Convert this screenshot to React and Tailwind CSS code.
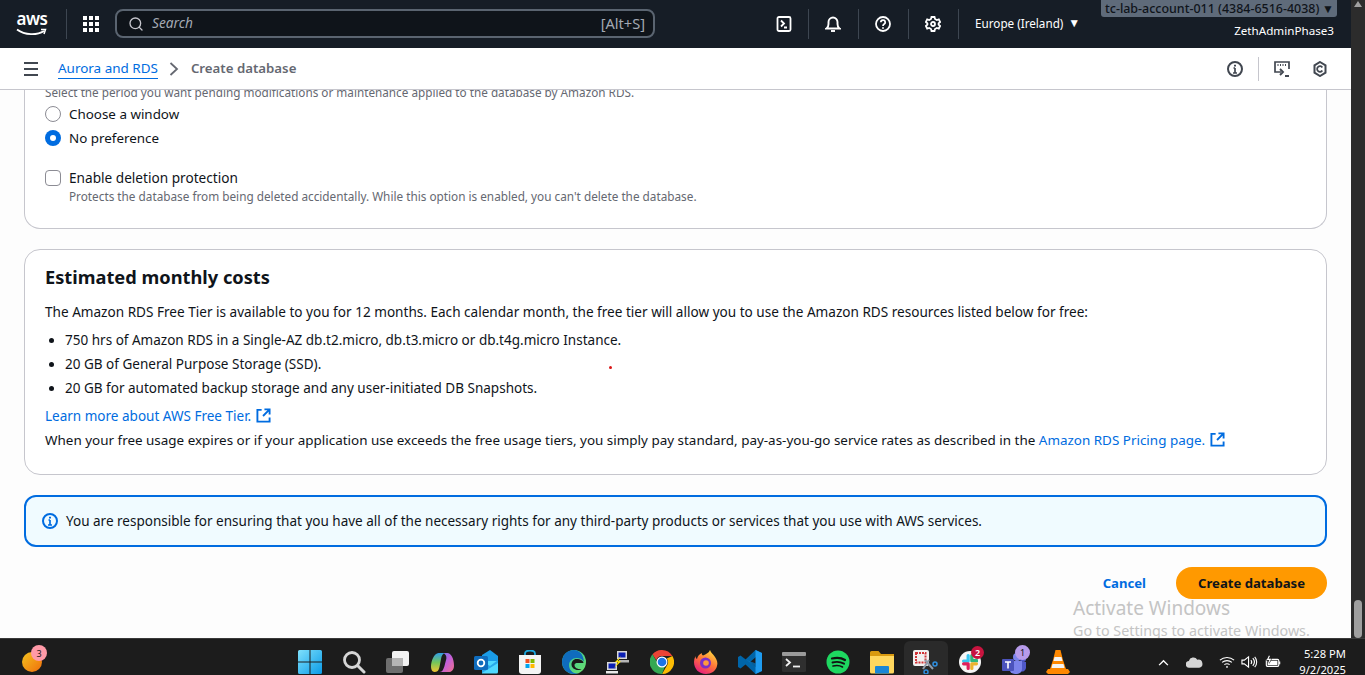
import { Search } from 'lucide-react';

function NavDivider() {
  return <div className="h-[30px] w-px bg-[#3d4651]" />;
}

function ExternalIcon() {
  return (
    <svg viewBox="0 0 16 16" className="ml-[5px] inline-block h-[15px] w-[15px] align-[-2px]" fill="none" stroke="#006ce0" strokeWidth="2">
      <path d="M6 2H1.500v12.500h13V10" />
      <path d="M9 1.500h5.500V7M14.500 1.500 7.500 8.500" />
    </svg>
  );
}

function AwsLogo() {
  return (
    <div className="relative flex h-[30px] w-[32px] flex-col items-center">
      <span className="text-[17px] leading-[20px] font-semibold tracking-[-0.5px] text-white">aws</span>
      <svg viewBox="0 0 32 9" className="absolute top-[19px] left-0 h-[9px] w-[32px]" fill="none">
        <path d="M1 1.500C9 7.500 21 7.500 28 3" stroke="#fff" strokeWidth="1.800" />
        <path d="M25 1.500h4.500L28 6" stroke="#fff" strokeWidth="1.500" />
      </svg>
    </div>
  );
}

function GridIcon() {
  return (
    <svg viewBox="0 0 16 16" className="h-[16px] w-[16px]" fill="#fff">
      {[0, 6, 12].map((y) => [0, 6, 12].map((x) => <rect key={`${x}-${y}`} x={x} y={y} width="4" height="4" />))}
    </svg>
  );
}

function TerminalIcon() {
  return (
    <svg viewBox="0 0 16 16" className="h-[16px] w-[16px]" fill="none" stroke="#fff" strokeWidth="1.800">
      <rect x="1.500" y="1" width="13" height="14" rx="1.500" />
      <path d="m5 4.500 3 3-3 3M8 11.500h3" />
    </svg>
  );
}

function BellIcon() {
  return (
    <svg viewBox="0 0 16 16" className="h-[16px] w-[16px]" fill="none" stroke="#fff" strokeWidth="1.900">
      <path d="M1.500 12.500h13c-1.500-1-2-2.500-2-4.500V6a4.500 4.500 0 0 0-9 0v2c0 2-.5 3.500-2 4.500Z" />
      <path d="M6 15h4" />
    </svg>
  );
}

function HelpIcon() {
  return (
    <svg viewBox="0 0 16 16" className="h-[16px] w-[16px]" fill="none" stroke="#fff" strokeWidth="1.800">
      <circle cx="8" cy="8" r="7" />
      <path d="M5.800 6.200a2.200 2.200 0 1 1 3.400 1.900C8.400 8.600 8 9 8 10" />
      <path d="M8 11.300v1.500" />
    </svg>
  );
}

function GearIcon() {
  return (
    <svg viewBox="0 0 16 16" className="h-[16px] w-[16px]" fill="none" stroke="#fff" strokeWidth="1.800">
      <path d="M6.500 1h3l.5 2 1.800 1 2-.6 1.300 2.600-1.500 1.400v1.200l1.500 1.400-1.300 2.600-2-.6-1.800 1-.5 2h-3l-.5-2-1.800-1-2 .6L.900 10.000l1.500-1.400V7.400L.900 6l1.300-2.600 2 .6 1.800-1Z" />
      <circle cx="8" cy="8" r="2" />
    </svg>
  );
}

function InfoIcon({ color = '#414750' }) {
  return (
    <svg viewBox="0 0 16 16" className="h-[16px] w-[16px]" fill="none" stroke={color} strokeWidth="2">
      <circle cx="8" cy="8" r="7" />
      <path d="M8 7v5M6 12h4M6.500 7H8" strokeWidth="1.700" />
      <path d="M8 3.800v1.700" />
    </svg>
  );
}

function FeedbackIcon() {
  return (
    <svg viewBox="0 0 16 16" className="h-[16px] w-[16px]" fill="none" stroke="#414750" strokeWidth="1.700">
      <path d="M7 11H1V1h14v7" />
      <path d="M3.500 4h1M6 4h1M8.500 4h1M11 4h1" strokeWidth="2" />
      <path d="m6 8 3 3-3 3M11 15h4" strokeWidth="1.900" />
    </svg>
  );
}

function ShieldIcon() {
  return (
    <svg viewBox="0 0 16 16" className="h-[16px] w-[16px]" fill="none" stroke="#414750" strokeWidth="2">
      <path d="m8 1 5.500 3.300v7.400L8 15l-5.500-3.300V4.300Z" />
      <path d="M10.300 6.500A2.800 2.800 0 1 0 10.300 9.500" strokeWidth="1.800" />
    </svg>
  );
}

function TopNav() {
  return (
    <header className="flex h-[48px] shrink-0 items-center bg-[#161d26] pb-[1px] text-white">
      <div className="flex w-[66px] justify-end pr-[18px]">
        <AwsLogo />
      </div>
      <NavDivider />
      <div className="flex w-[48px] justify-center">
        <GridIcon />
      </div>
      <div className="flex h-[29px] w-[540px] items-center rounded-lg border-2 border-[#5a6470] bg-[#0f141a] pr-[8px] pl-[11px]">
        <Search size={16} strokeWidth={2} className="text-[#c6c6cd]" />
        <span className="ml-[8px] text-[13.7px] text-[#a3a9b3] italic">Search</span>
        <span className="ml-auto text-[14.600px] text-[#a3a9b3]">[Alt+S]</span>
      </div>
      <div className="flex w-[153px] justify-end pr-[16px]">
        <TerminalIcon />
      </div>
      <NavDivider />
      <div className="flex w-[49px] justify-center pr-[1px]">
        <BellIcon />
      </div>
      <NavDivider />
      <div className="flex w-[49px] justify-center pr-[1px]">
        <HelpIcon />
      </div>
      <NavDivider />
      <div className="flex w-[49px] justify-center pr-[1px]">
        <GearIcon />
      </div>
      <NavDivider />
      <div className="-mt-[2px] ml-[16px] flex w-[126px] items-center text-[11.700px] leading-[16px]">
        <span>Europe (Ireland)</span>
        <span className="ml-[5px] text-[12px]">▼</span>
      </div>
      <div className="flex w-[236px] flex-col items-end self-start">
        <div className="flex h-[17px] w-full items-center justify-between rounded-b-[3px] bg-[#5f6b7a] pt-[1px] pr-[3px] pl-[4px] text-[12.460px] font-medium text-[#0f141a]">
          <span>tc-lab-account-011 (4384-6516-4038)</span>
          <span className="text-[12px]">▼</span>
        </div>
        <span className="mt-[6px] pr-[3px] text-[11.650px] leading-[16px]">ZethAdminPhase3</span>
      </div>
      <div className="flex-1" />
    </header>
  );
}

function SubNav() {
  return (
    <div className="flex h-[42px] shrink-0 items-center border-b border-[#c6c6cd] bg-white pt-[1px]">
      <div className="ml-[24px] flex w-[14px] flex-col gap-[4px]">
        <div className="h-[2px] bg-[#414750]" />
        <div className="h-[2px] bg-[#414750]" />
        <div className="h-[2px] bg-[#414750]" />
      </div>
      <a className="ml-[20px] border-b border-[#006ce0] text-[13.460px] leading-[19px] text-[#006ce0]">Aurora and RDS</a>
      <svg viewBox="0 0 10 14" className="ml-[11px] h-[14px] w-[10px]" fill="none" stroke="#656871" strokeWidth="1.800">
        <path d="m1.500 1 6.500 6-6.500 6" />
      </svg>
      <span className="ml-[12px] text-[13.250px] font-semibold text-[#656871]">Create database</span>
      <div className="ml-auto flex items-center">
        <InfoIcon />
        <div className="mx-[15px] h-[24px] w-px bg-[#c6c6cd]" />
        <FeedbackIcon />
        <div className="w-[22px]" />
        <ShieldIcon />
        <div className="w-[23px]" />
      </div>
    </div>
  );
}

function MaintenanceCard() {
  return (
    <section className="rounded-b-2xl border-x border-b border-[#c6c6cd] bg-white pt-[1px] pr-[20px] pb-[24px] pl-[20px]">
      <div className="-mt-[7px] text-[11.740px] leading-[16px] text-[#656871]">
        Select the period you want pending modifications or maintenance applied to the database by Amazon RDS.
      </div>
      <div className="mt-[4px] flex items-center gap-[8px] text-[13.400px] leading-[20px] text-[#0f141a]">
        <div className="h-[16px] w-[16px] rounded-full border border-[#8c8c94] bg-white" />
        <span>Choose a window</span>
      </div>
      <div className="mt-[4px] flex items-center gap-[8px] text-[13.400px] leading-[20px] text-[#0f141a]">
        <div className="flex h-[16px] w-[16px] items-center justify-center rounded-full bg-[#006ce0]">
          <div className="h-[6px] w-[6px] rounded-full bg-white" />
        </div>
        <span>No preference</span>
      </div>
      <div className="mt-[20px] flex items-center gap-[8px] text-[13.640px] leading-[20px] text-[#0f141a]">
        <div className="h-[16px] w-[16px] rounded-[4px] border border-[#8c8c94] bg-white" />
        <span>Enable deletion protection</span>
      </div>
      <div className="pl-[24px] text-[11.770px] leading-[16px] text-[#656871]">
        Protects the database from being deleted accidentally. While this option is enabled, you can't delete the database.
      </div>
    </section>
  );
}

function CostsCard() {
  return (
    <section className="mt-[20px] h-[226px] rounded-2xl border border-[#c6c6cd] bg-white px-[20px] pt-[14px] text-[13.530px] leading-[20px] text-[#0f141a]">
      <h2 className="text-[18.240px] leading-[26px] font-bold">Estimated monthly costs</h2>
      <p className="mt-[12px] text-[13.590px]">
        The Amazon RDS Free Tier is available to you for 12 months. Each calendar month, the free tier will allow you to use the Amazon RDS resources listed below for free:
      </p>
      <ul className="mt-[8px] flex list-disc flex-col gap-[4px] pl-[20px]">
        <li>750 hrs of Amazon RDS in a Single-AZ db.t2.micro, db.t3.micro or db.t4g.micro Instance.</li>
        <li>20 GB of General Purpose Storage (SSD).</li>
        <li>20 GB for automated backup storage and any user-initiated DB Snapshots.</li>
      </ul>
      <p className="mt-[8px] text-[#006ce0]">
        Learn more about AWS Free Tier.
        <ExternalIcon />
      </p>
      <p className="mt-[4px] text-[13.450px]">
        When your free usage expires or if your application use exceeds the free usage tiers, you simply pay standard, pay-as-you-go service rates as described in the{' '}
        <span className="text-[#006ce0]">
          Amazon RDS Pricing page.
          <ExternalIcon />
        </span>
      </p>
    </section>
  );
}

function RightsNotice() {
  return (
    <div className="mt-[20px] flex h-[52px] items-center rounded-xl border-2 border-[#006ce0] bg-[#f0fbff] pl-[16px] text-[13.530px] text-[#0f141a]">
      <InfoIcon color="#006ce0" />
      <span className="ml-[8px]">
        You are responsible for ensuring that you have all of the necessary rights for any third-party products or services that you use with AWS services.
      </span>
    </div>
  );
}

function Content() {
  return (
    <main className="relative flex-1 overflow-hidden bg-[#fdfdfd] px-[24px]">
      <MaintenanceCard />
      <CostsCard />
      <RightsNotice />
      <div className="mt-[20px] flex items-center justify-end text-[13.130px] font-bold">
        <a className="pt-[1px] text-[#006ce0]">Cancel</a>
        <button type="button" className="ml-[30px] h-[32px] w-[151px] rounded-full bg-[#ff9900] pt-[1px] text-[#0f141a]">
          Create database
        </button>
      </div>
      <div className="absolute top-[276px] left-[609px] h-[3px] w-[3px] rounded-full bg-[#d91515]" />
      <div className="pointer-events-none absolute top-[505px] left-[1073px] text-[#c4c4c4]">
        <div className="text-[19px] leading-[26px]">Activate Windows</div>
        <div className="text-[14.300px] leading-[19px] whitespace-nowrap">Go to Settings to activate Windows.</div>
      </div>
    </main>
  );
}

function Scrollbar() {
  return (
    <div className="relative flex w-[14px] shrink-0 flex-col items-center bg-[#2c2c2c]">
      <div className="mt-[1px] h-0 w-0 border-x-[4px] border-b-[6px] border-x-transparent border-b-[#a0a0a0]" />
      <div className="absolute top-[600px] h-[38px] w-[8px] rounded-full bg-[#9f9f9f]" />
    </div>
  );
}

function TaskIcon({ children, active }) {
  return (
    <div className={`relative flex h-[34px] w-[44px] shrink-0 items-center justify-center pt-[8px] ${active ? 'rounded-t-md bg-[#2a2a2a]' : ''}`}>
      {children}
    </div>
  );
}

function Badge({ children, className }) {
  return (
    <div className={`absolute flex h-[13px] w-[13px] items-center justify-center rounded-full text-[9px] leading-none ${className}`}>
      {children}
    </div>
  );
}

function TaskIcons() {
  return (
    <div className="flex items-center">
      <TaskIcon>
        <svg viewBox="0 0 24 24" className="h-[24px] w-[24px]">
          <defs>
            <linearGradient id="win" x1="0" y1="0" x2="1" y2="1">
              <stop offset="0" stopColor="#7fe0fb" />
              <stop offset="1" stopColor="#0a9be8" />
            </linearGradient>
          </defs>
          <path fill="url(#win)" d="M0 1.500A1.500 1.500 0 0 1 1.500 0H11.500V11.500H0ZM12.500 0H22.500A1.500 1.500 0 0 1 24 1.500V11.500H12.500ZM0 12.500H11.500V24H1.500A1.500 1.500 0 0 1 0 22.500ZM12.500 12.500H24V22.500A1.500 1.500 0 0 1 22.500 24H12.500Z" />
        </svg>
      </TaskIcon>
      <TaskIcon>
        <svg viewBox="0 0 24 24" className="h-[24px] w-[24px]" fill="none" stroke="#d6d6d6">
          <circle cx="10" cy="10" r="7.500" strokeWidth="2.800" />
          <path d="m16 16 6 6" strokeWidth="3" strokeLinecap="round" />
        </svg>
      </TaskIcon>
      <TaskIcon>
        <svg viewBox="0 0 24 24" className="h-[24px] w-[24px]">
          <rect x="6" y="1" width="17" height="15" rx="2" fill="#f2f2f2" />
          <rect x="0" y="8" width="17" height="15" rx="2" fill="#6e6e6e" />
          <rect x="6" y="8" width="11" height="8" fill="#b5b5b5" />
        </svg>
      </TaskIcon>
      <TaskIcon>
        <svg viewBox="0 0 24 24" className="h-[23px] w-[23px]">
          <defs>
            <linearGradient id="cop1" x1="0" y1="0" x2="0" y2="1">
              <stop offset="0" stopColor="#2f9ee8" />
              <stop offset="0.500" stopColor="#74c55a" />
              <stop offset="1" stopColor="#f5c52f" />
            </linearGradient>
            <linearGradient id="cop2" x1="0" y1="0" x2="1" y2="1">
              <stop offset="0" stopColor="#5a7cf0" />
              <stop offset="0.500" stopColor="#c35fd8" />
              <stop offset="1" stopColor="#f0708a" />
            </linearGradient>
          </defs>
          <path fill="url(#cop1)" d="M8 2h6c-2 1-3 3-3.500 6L9 16c-.5 3-1.500 6-5 6-3 0-4-3-4-6 0-5 3-14 8-14Z" />
          <path fill="url(#cop2)" d="M13 2h4c4 0 7 6 7 13 0 4-2 7-6 7h-9c3 0 4-3 5-6l2-8c.5-3-1-5-3-6Z" />
        </svg>
      </TaskIcon>
      <TaskIcon>
        <svg viewBox="0 0 24 24" className="h-[24px] w-[24px]">
          <path fill="#1a9ce8" d="M8 5 16 0l8 6v16H8Z" />
          <path fill="#50d9ff" d="M8 11h16v11a1.500 1.500 0 0 1-1.500 1.500H8Z" />
          <path fill="#28a8ea" d="m8 11 8 5 8-6v3l-16 10Z" />
          <rect x="0" y="6" width="14" height="14" rx="1.500" fill="#0f6cbd" />
          <circle cx="7" cy="13" r="3.300" fill="none" stroke="#fff" strokeWidth="1.800" />
        </svg>
      </TaskIcon>
      <TaskIcon>
        <svg viewBox="0 0 24 24" className="h-[24px] w-[24px]">
          <path d="M7 6V3.500C7 1.500 9 .5 12 .5s5 1 5 3V6" fill="none" stroke="#1aa5dc" strokeWidth="1.800" />
          <path fill="#f4f4f4" d="M1 5h22v16a3 3 0 0 1-3 3H4a3 3 0 0 1-3-3Z" />
          <rect x="7.500" y="9" width="4" height="4" fill="#f25022" />
          <rect x="12.500" y="9" width="4" height="4" fill="#7fba00" />
          <rect x="7.500" y="14" width="4" height="4" fill="#00a4ef" />
          <rect x="12.500" y="14" width="4" height="4" fill="#ffb900" />
        </svg>
      </TaskIcon>
      <TaskIcon>
        <svg viewBox="0 0 24 24" className="h-[24px] w-[24px]">
          <defs>
            <linearGradient id="edge" x1="0" y1="0" x2="1" y2="1">
              <stop offset="0" stopColor="#2fc6a5" />
              <stop offset="1" stopColor="#6ee06a" />
            </linearGradient>
          </defs>
          <circle cx="12" cy="12" r="12" fill="url(#edge)" />
          <path fill="#0f6cbd" d="M12 0C5 0 0 5.500 0 12c0 7 5.500 12 12 12 1.500 0 3-.3 4-.8C11 24 7 20 7 15c0-4 3.500-7 7.500-7 3 0 5.500 1 7.500 3.500C21.500 5 17.500 0 12 0Z" />
          <path fill="#1a1a1a" d="M14.500 9c-3 0-5 2.500-5 5.500s3 5.500 6.500 5.500c1.500 0 2.500-.3 3.500-1-2.500.5-7-.5-7-4 0-1.500 1.500-2 3-2h6c0-2-3-4-7-4Z" />
        </svg>
      </TaskIcon>
      <TaskIcon>
        <svg viewBox="0 0 24 24" className="h-[24px] w-[24px]">
          <rect x="11" y="1" width="10" height="8" fill="#d8d8d8" />
          <rect x="12.500" y="2.500" width="7" height="5" fill="#0a1fb5" />
          <rect x="13" y="10" width="10" height="2.500" fill="#b5b5b5" />
          <rect x="1" y="12" width="10" height="8" fill="#d8d8d8" />
          <rect x="2.500" y="13.500" width="7" height="5" fill="#0a1fb5" />
          <rect x="0" y="21" width="12" height="2.500" fill="#e8e8e8" />
          <path fill="#ffe100" d="M15 6 9 12l3 .5L8 18l7-6.500-3-.5Z" />
        </svg>
      </TaskIcon>
      <TaskIcon>
        <svg viewBox="0 0 24 24" className="h-[24px] w-[24px]">
          <path fill="#ea4335" d="M12 0a12 12 0 0 1 10.400 6H12a6 6 0 0 0-5.700 4.200L2.500 4.300A12 12 0 0 1 12 0Z" />
          <path fill="#fbbc04" d="M22.400 6A12 12 0 0 1 12 24l5.200-9A6 6 0 0 0 16.800 8.400Z" />
          <path fill="#34a853" d="M2.500 4.300 7.600 13a5.500 5.500 0 0 0 7.600 3L12 24A12 12 0 0 1 2.500 4.300Z" />
          <circle cx="12" cy="12" r="5.500" fill="#fff" />
          <circle cx="12" cy="12" r="4.300" fill="#1a73e8" />
        </svg>
      </TaskIcon>
      <TaskIcon>
        <svg viewBox="0 0 24 24" className="h-[24px] w-[24px]">
          <defs>
            <linearGradient id="ff" x1="0.800" y1="0" x2="0.200" y2="1">
              <stop offset="0" stopColor="#ffdf3f" />
              <stop offset="0.500" stopColor="#ff7139" />
              <stop offset="1" stopColor="#e31587" />
            </linearGradient>
          </defs>
          <path fill="url(#ff)" d="M16 0c1 3 3 4 5 7 2 3 3 6 2 9-1 5-6 8-11 8C5 24 0 19 0 12c0-2 .5-4 1.500-6 0 1.500.5 2.500 1.500 3 .5-3 2.500-5 5-6-.5 1 0 2 1 2.500C12 4 15 3 16 0Z" />
          <circle cx="11.500" cy="13" r="5.500" fill="#7b2fc9" />
          <circle cx="12" cy="13" r="2.800" fill="#ff9a3d" />
        </svg>
      </TaskIcon>
      <TaskIcon>
        <svg viewBox="0 0 24 24" className="h-[24px] w-[24px]">
          <path fill="#0065a9" d="m17.500 24-10-9.500L2.500 18.500 0 17V7l2.500-1.500 5 4L17.500 0 24 3v18ZM18 7l-6 5 6 5Z" />
          <path fill="#1f9cf0" d="M17.500 0 24 3v18l-6.500 3Z" />
          <path fill="#007acc" d="M2.500 5.500 18 17v-3.500L7.500 9.500Z" opacity="0.700" />
        </svg>
      </TaskIcon>
      <TaskIcon>
        <svg viewBox="0 0 24 24" className="h-[24px] w-[24px]">
          <rect y="2" width="24" height="20" rx="1.500" fill="#2f2f2f" />
          <rect y="2" width="24" height="4" rx="1" fill="#9a9a9a" />
          <path d="m4 9 4 3.500L4 16" fill="none" stroke="#f0f0f0" strokeWidth="1.800" />
          <path d="M11 16.500h7" stroke="#f0f0f0" strokeWidth="1.800" />
        </svg>
      </TaskIcon>
      <TaskIcon>
        <svg viewBox="0 0 24 24" className="h-[24px] w-[24px]" fill="none" stroke="#111" strokeLinecap="round">
          <circle cx="12" cy="12" r="11.500" fill="#1ed760" stroke="none" />
          <path d="M6 8.500c4-1 9-1 13 1.500" strokeWidth="2.200" />
          <path d="M6.500 12.500c4-1 8-.7 11.500 1.200" strokeWidth="1.900" />
          <path d="M7 16c3.500-.8 7-.5 9.500 1" strokeWidth="1.600" />
        </svg>
      </TaskIcon>
      <TaskIcon>
        <svg viewBox="0 0 24 24" className="h-[24px] w-[24px]">
          <path fill="#d99a10" d="M0 2.500A1.500 1.500 0 0 1 1.500 1h7L11 4h13v4H0Z" />
          <path fill="#ffd75e" d="M0 6h24v16a1.500 1.500 0 0 1-1.500 1.500h-21A1.500 1.500 0 0 1 0 22Z" />
          <rect x="5" y="16" width="14" height="7.500" rx="1" fill="#1a86d6" />
        </svg>
      </TaskIcon>
      <TaskIcon active>
        <svg viewBox="0 0 26 24" className="h-[24px] w-[26px]">
          <rect x="0" y="0" width="16" height="16" rx="2" fill="#f0f0f0" />
          <rect x="3" y="3" width="9.500" height="9.500" fill="none" stroke="#d13438" strokeWidth="2" strokeDasharray="2 1" />
          <path d="m12 10 8 9M16 10l-6 9" stroke="#8f9aa8" strokeWidth="2" />
          <circle cx="22" cy="14" r="2" fill="none" stroke="#2f8fe0" strokeWidth="1.500" />
          <circle cx="13" cy="22" r="2" fill="none" stroke="#2f8fe0" strokeWidth="1.500" />
        </svg>
      </TaskIcon>
      <TaskIcon>
        <svg viewBox="0 0 24 24" className="h-[22px] w-[22px]" strokeLinecap="round" strokeWidth="3.500">
          <circle cx="12" cy="12" r="12" fill="#f5f5f5" />
          <path d="M10 5v6M5 11h4" stroke="#36c5f0" />
          <path d="M19 10v.5h-5M14 5v5" stroke="#2eb67d" />
          <path d="M14 19v-5M19 14h-5" stroke="#ecb22e" />
          <path d="M5 14h5M10 14v5" stroke="#e01e5a" />
        </svg>
        <Badge className="top-[5px] right-[8px] bg-[#c8143f] font-semibold text-white">2</Badge>
      </TaskIcon>
      <TaskIcon>
        <svg viewBox="0 0 24 24" className="h-[24px] w-[24px]">
          <circle cx="15" cy="7" r="4" fill="#7b83eb" />
          <circle cx="21" cy="9" r="3" fill="#5059c9" />
          <path fill="#5059c9" d="M17 12h7v6a4 4 0 0 1-6 3Z" />
          <path fill="#7b83eb" d="M7 11h13v8a5 5 0 0 1-5 5h-2a6 6 0 0 1-6-6Z" />
          <rect x="0" y="9" width="12" height="12" rx="1" fill="#4b53bc" />
          <path d="M3 12h6M6 12v6.500" stroke="#fff" strokeWidth="1.600" />
        </svg>
        <Badge className="top-[4px] right-[6px] h-[15px] w-[15px] bg-[#b79bea] text-[#141414]">1</Badge>
      </TaskIcon>
      <TaskIcon>
        <svg viewBox="0 0 24 24" className="h-[24px] w-[24px]">
          <path fill="#ff8800" d="M9.500 0h5l2.500 10 3 9h-16l3-9Z" />
          <path fill="#f4f4f4" d="M8.500 7h7l1 4h-9ZM6.500 14h11l1 4h-13Z" />
          <path fill="#ff8800" d="M2 19h20l2 3-2 2H2l-2-2Z" />
        </svg>
      </TaskIcon>
    </div>
  );
}

function Taskbar() {
  return (
    <footer className="flex h-[37px] shrink-0 items-center border-t border-[#3a3a3a] bg-[#1c1c1c] pt-[2px] text-white">
      <div className="relative mt-[8px] w-[288px] shrink-0">
        <div className="ml-[22px] h-[20px] w-[20px] rounded-full bg-gradient-to-br from-[#f2c21e] to-[#ee6c0c]" />
        <Badge className="top-[-7px] left-[31px] h-[16px] w-[16px] bg-[#ff9aa8] text-[#161616]">3</Badge>
      </div>
      <TaskIcons />
      <div className="mt-[8px] ml-auto flex items-center pr-[19px]">
        <svg viewBox="0 0 12 8" className="h-[7px] w-[11px]" fill="none" stroke="#fff" strokeWidth="1.600">
          <path d="m1 7 5-5 5 5" />
        </svg>
        <svg viewBox="0 0 18 12" className="ml-[17px] h-[12px] w-[17px]">
          <path fill="#d6d6d6" d="M3.500 12a3.500 3.500 0 0 1-.5-7A5 5 0 0 1 12 3.500 4.200 4.200 0 0 1 14 12Z" />
        </svg>
        <svg viewBox="0 0 18 14" className="ml-[16px] h-[14px] w-[16px]" fill="none" stroke="#fff" strokeWidth="1.200">
          <path d="M1 5c4.500-4 11.500-4 16 0M3.500 7.500c3-2.700 8-2.700 11 0M6 10c1.800-1.300 4.200-1.300 6 0" />
          <circle cx="9" cy="12.500" r="1" fill="#fff" stroke="none" />
        </svg>
        <svg viewBox="0 0 18 14" className="ml-[6px] h-[14px] w-[17px]" fill="none" stroke="#fff" strokeWidth="1.200">
          <path d="M1 5v4h2.500L8 12.500v-11L3.500 5ZM10.500 5c1 1.200 1 2.800 0 4M12.500 3c2 2.300 2 5.700 0 8M14.500 1.500c2.800 3 2.800 8 0 11" />
        </svg>
        <svg viewBox="0 0 18 14" className="ml-[7px] h-[14px] w-[16px]" fill="none" stroke="#fff" strokeWidth="1.300">
          <rect x="1.500" y="4" width="14" height="8" rx="1.500" />
          <path d="M16.500 6.500v3" />
          <rect x="3" y="5.500" width="11" height="5" fill="#fff" stroke="none" />
          <path d="M5 0 3 4h3l-2 4" stroke="#1c1c1c" strokeWidth="2.500" />
          <path d="M5 0 3 4h3l-2 4" />
        </svg>
        <div className="ml-[18px] flex flex-col items-end text-[11.200px] leading-[16px]">
          <span>5:28 PM</span>
          <span>9/2/2025</span>
        </div>
      </div>
    </footer>
  );
}

export default function App() {
  return (
    <div className="flex h-[675px] w-full flex-col overflow-hidden font-['Noto_Sans','Open_Sans',sans-serif]">
      <div className="flex min-h-0 flex-1">
        <div className="flex min-w-0 flex-1 flex-col">
          <TopNav />
          <SubNav />
          <Content />
        </div>
        <Scrollbar />
      </div>
      <Taskbar />
    </div>
  );
}
